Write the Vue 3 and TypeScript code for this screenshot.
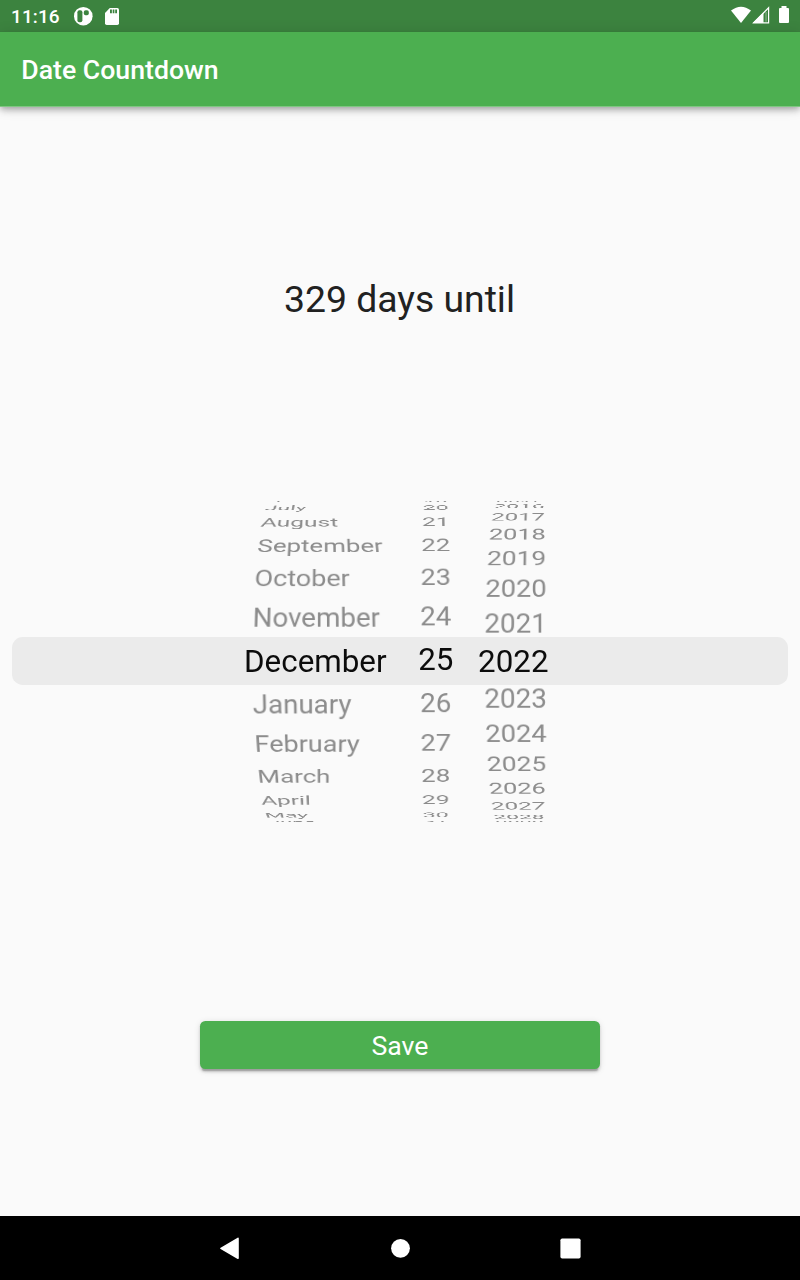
<script setup lang="ts">
interface Column {
  key: string
  values: string[]
  selected: number
  step: number
  shift: number
}

interface Row {
  label: string
  angle: number
}

const columns: Column[] = [
  {
    key: 'month',
    values: ['June', 'July', 'August', 'September', 'October', 'November', 'December',
      'January', 'February', 'March', 'April', 'May', 'June'],
    selected: 6,
    step: 11.065,
    shift: 0,
  },
  {
    key: 'day',
    values: Array.from({ length: 13 }, (_, i) => String(19 + i)),
    selected: 6,
    step: 11.065,
    shift: -0.35,
  },
  {
    key: 'year',
    values: Array.from({ length: 15 }, (_, i) => String(2015 + i)),
    selected: 7,
    step: 9.54,
    shift: 0,
  },
]

const rowsOf = (c: Column): Row[] =>
  c.values.map((label, i) => ({ label, angle: (i - c.selected) * c.step + c.shift }))

// Each row sits on a cylinder of radius 228.3px.
const onCylinder = (angle: number) => ({
  transform: `translateY(0.5px) perspective(444.4px) translateZ(-228.3px) rotateX(${-angle}deg) translateZ(228.3px)`,
})
</script>

<template>
  <div class="screen">
    <header class="status">
      <span class="clock">11:16</span>
      <svg class="app-icon" width="20" height="20" viewBox="0 0 20 20">
        <circle cx="10.3" cy="10.2" r="9.3" fill="#fff" />
        <rect x="4.4" y="4.2" width="5" height="12" rx="2" fill="#3c833f" />
        <rect x="10.8" y="4.2" width="5" height="5" rx="1.8" fill="#3c833f" />
      </svg>
      <svg class="sd-icon" width="14" height="17" viewBox="0 0 14 17">
        <path d="M4.8 0H12.3Q14 0 14 1.7V15.3Q14 17 12.3 17H1.7Q0 17 0 15.3V5Z" fill="#fff" />
        <path d="M5 1.6h1.9v3.6H5zM7.7 1.6h1.7v3.6H7.7zM10.2 1.6h1.8v3.6h-1.8z" fill="#3c833f" />
      </svg>
      <span class="grow"></span>
      <svg width="60" height="20" viewBox="0 0 60 20">
        <path d="M1 4.6Q11-3 21 4.6L11 17Z" fill="#fff" />
        <path d="M38.6 1.8V16.9H23.6Z" fill="none" stroke="#fff" stroke-width="1.2" />
        <path d="M33.5 6.2V17H22.6Z" fill="#fff" />
        <path d="M35.3 6h1.5v9.8h-1.5z" fill="#fff" opacity="0.3" />
        <path d="M51.5 0h5v2H58q1 0 1 1V16q0 1-1 1H50q-1 0-1-1V3q0-1 1-1h1.5Z" fill="#fff" />
      </svg>
    </header>
    <div class="appbar">Date Countdown</div>

    <main class="content">
      <h1 class="headline">329 days until</h1>
      <section class="picker">
        <div class="band"></div>
        <div class="wheels">
          <div v-for="c in columns" :key="c.key" class="wheel" :class="c.key">
            <template v-for="(r, i) in rowsOf(c)" :key="i">
              <span v-if="i !== c.selected" class="row" :style="onCylinder(r.angle)">{{ r.label }}</span>
              <span v-else class="row chosen">{{ r.label }}</span>
            </template>
          </div>
        </div>
      </section>
      <button class="save">Save</button>
    </main>

    <nav class="nav">
      <svg width="20" height="22" viewBox="0 0 20 22">
        <path d="M18 1.4L1 11.4L18 21.2Z" fill="#fff" stroke="#fff" stroke-width="1.6" stroke-linejoin="round" />
      </svg>
      <svg width="20" height="20" viewBox="0 0 20 20"><circle cx="10.5" cy="10.3" r="9.4" fill="#fff" /></svg>
      <svg width="21" height="21" viewBox="0 0 21 21"><rect x="0.4" y="0.4" width="20.2" height="20.2" rx="1.8" fill="#fff" /></svg>
    </nav>
  </div>
</template>

<style>
body {
  margin: 0;
}
</style>

<style scoped>
.screen {
  width: 800px;
  height: 1280px;
  display: flex;
  flex-direction: column;
  overflow: hidden;
  background: #fafafa;
  font-family: Roboto, sans-serif;
}
.status {
  height: 32px;
  flex: none;
  box-sizing: border-box;
  padding: 0 10px 0 11px;
  display: flex;
  align-items: center;
  background: #3c833f;
  color: #fff;
}
.status svg {
  flex: none;
}
.clock {
  width: 62px;
  font-size: 19px;
  font-weight: 500;
  letter-spacing: 0.1px;
  white-space: nowrap;
}
.sd-icon {
  margin-left: 12.4px;
}
.grow {
  flex: 1;
}
.appbar {
  height: 74.67px;
  flex: none;
  box-sizing: border-box;
  padding: 1px 0 0 21.3px;
  display: flex;
  align-items: center;
  background: linear-gradient(#4caf50, #4caf50) top / 100% 74px no-repeat #80c683;
  box-shadow: 0 2.7px 5.3px -1.3px rgba(0, 0, 0, 0.2), 0 5.3px 6.7px rgba(0, 0, 0, 0.14), 0 1.3px 13.3px rgba(0, 0, 0, 0.12);
  color: #fff;
  font-size: 26.67px;
  font-weight: 500;
}
.content {
  flex: 1;
  display: flex;
  flex-direction: column;
  align-items: center;
}
.headline {
  margin: 168.3px 1px 0 0;
  height: 48px;
  line-height: 48px;
  font-size: 37.33px;
  font-weight: 400;
  color: #212121;
}
.picker {
  width: 776px;
  height: 320px;
  margin-top: 178.2px;
  display: grid;
  align-items: center;
}
.band {
  grid-area: 1 / 1;
  height: 47.6px;
  border-radius: 10.7px;
  background: #ebebeb;
}
.wheels {
  grid-area: 1 / 1;
  display: flex;
  margin: 0.4px 0 0 240.3px;
}
.wheel {
  display: grid;
  align-items: center;
  height: 42.67px;
}
.month {
  width: 168.1px;
  --axis: 71px;
}
.day {
  width: 63.4px;
  --axis: 15.7px;
}
.year {
  width: 63px;
  --axis: 50px;
}
.row {
  grid-area: 1 / 1;
  height: 42.67px;
  line-height: 42.67px;
  font-size: 28px;
  color: #8c8c8c;
  white-space: nowrap;
  transform-origin: var(--axis) 50%;
}
.chosen {
  color: #0c0c0c;
  transform: translateY(1px) scale(1.119);
}
.month .chosen {
  transform: translate(0.5px, 1px) scale(1.119);
}
.day .chosen {
  transform: translateY(-1.2px) scale(1.119);
}
.save {
  width: 400px;
  height: 48px;
  margin-top: 200px;
  padding: 2px 0 0;
  border: 0;
  border-radius: 5.3px;
  background: #4caf50;
  box-shadow: 0 4px 1.3px -2.7px rgba(0, 0, 0, 0.2), 0 2.7px 2.7px rgba(0, 0, 0, 0.14), 0 1.3px 6.7px rgba(0, 0, 0, 0.12);
  color: #fff;
  font-family: inherit;
  font-size: 26.67px;
  line-height: 46px;
}
.nav {
  height: 64px;
  flex: none;
  box-sizing: border-box;
  padding: 0 219px 0 220px;
  display: flex;
  align-items: center;
  justify-content: space-between;
  background: #000;
}
</style>
